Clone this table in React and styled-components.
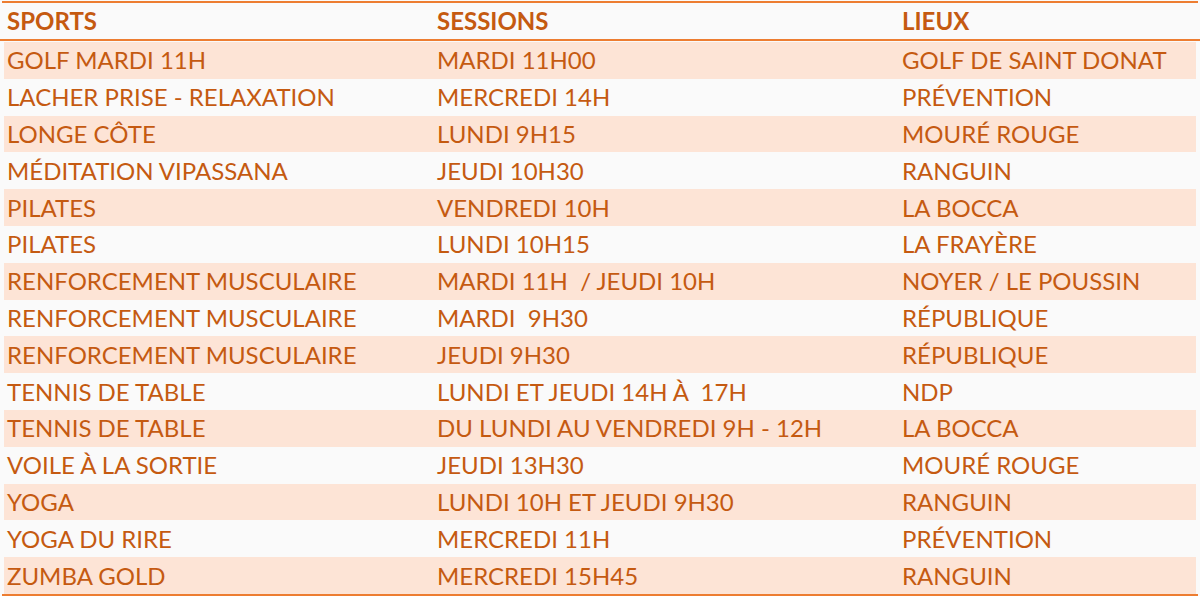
import styled, { createGlobalStyle } from 'styled-components';

const GlobalStyle = createGlobalStyle`
  html, body {
    margin: 0;
    padding: 0;
    background: #fafafa;
  }
  body {
    font-family: Lato, "Open Sans", sans-serif;
  }
`;

const Frame = styled.div`
  width: 1200px;
  height: 596px;
  padding: 1px 2px 0;
  box-sizing: border-box;
  background: #fafafa;
`;

const Table = styled.div`
  border-top: 2px solid #ed7d31;
  border-bottom: 3px solid #ed7d31;
`;

const Row = styled.div`
  display: grid;
  grid-template-columns: 430px 465px 1fr;
  height: ${p => (p.$head ? '36px' : '36.8px')};
  margin: 0 2px;
  align-items: center;
  background: ${p => (p.$shaded ? '#fde4d6' : 'transparent')};
`;

const HeadRow = styled(Row)`
  border-bottom: 2px solid #ed7d31;
  margin: 0 -2px 1px;
  padding: 0 4px;
`;

const Cell = styled.div`
  padding-left: 3px;
  color: #c55a11;
  font-size: 24px;
  font-weight: ${p => (p.$bold ? 700 : 400)};
  white-space: pre;
  line-height: 1;
`;

const rows = [
  ['GOLF MARDI 11H', 'MARDI 11H00', 'GOLF DE SAINT DONAT'],
  ['LACHER PRISE - RELAXATION', 'MERCREDI 14H', 'PRÉVENTION'],
  ['LONGE CÔTE', 'LUNDI 9H15', 'MOURÉ ROUGE'],
  ['MÉDITATION VIPASSANA', 'JEUDI 10H30', 'RANGUIN'],
  ['PILATES', 'VENDREDI 10H', 'LA BOCCA'],
  ['PILATES', 'LUNDI 10H15', 'LA FRAYÈRE'],
  ['RENFORCEMENT MUSCULAIRE', 'MARDI 11H  / JEUDI 10H', 'NOYER / LE POUSSIN'],
  ['RENFORCEMENT MUSCULAIRE', 'MARDI  9H30', 'RÉPUBLIQUE'],
  ['RENFORCEMENT MUSCULAIRE', 'JEUDI 9H30', 'RÉPUBLIQUE'],
  ['TENNIS DE TABLE', 'LUNDI ET JEUDI 14H À  17H', 'NDP'],
  ['TENNIS DE TABLE', 'DU LUNDI AU VENDREDI 9H - 12H', 'LA BOCCA'],
  ['VOILE À LA SORTIE', 'JEUDI 13H30', 'MOURÉ ROUGE'],
  ['YOGA', 'LUNDI 10H ET JEUDI 9H30', 'RANGUIN'],
  ['YOGA DU RIRE', 'MERCREDI 11H', 'PRÉVENTION'],
  ['ZUMBA GOLD', 'MERCREDI 15H45', 'RANGUIN'],
];

export default function App() {
  return (
    <Frame>
      <GlobalStyle />
      <Table>
        <HeadRow $head>
          <Cell $bold>SPORTS</Cell>
          <Cell $bold>SESSIONS</Cell>
          <Cell $bold>LIEUX</Cell>
        </HeadRow>
        {rows.map((r, i) => (
          <Row key={i} $shaded={i % 2 === 0}>
            {r.map((c, j) => (
              <Cell key={j}>{c}</Cell>
            ))}
          </Row>
        ))}
      </Table>
    </Frame>
  );
}
